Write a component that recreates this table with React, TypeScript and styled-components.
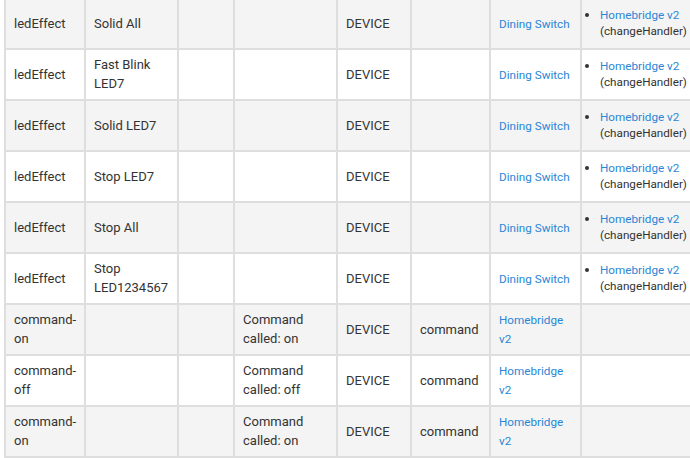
import React from "react";
import styled, { createGlobalStyle } from "styled-components";

const Global = createGlobalStyle`
  html, body { margin: 0; padding: 0; background: #fff; overflow: hidden; }
  body { font-family: Roboto, "Noto Sans", sans-serif; }
`;

const Viewport = styled.div`
  width: 690px;
  height: 458px;
  overflow: hidden;
  padding-left: 4px;
  box-sizing: border-box;
`;

const Table = styled.table`
  border-collapse: collapse;
  table-layout: fixed;
  width: 696px;
  margin-top: -3px;
  font-size: 13px;
  line-height: 19px;
  color: #333333;
`;

const Row = styled.tr<{ $shaded: boolean }>`
  background: ${(p) => (p.$shaded ? "#f4f4f4" : "#ffffff")};
`;

const Cell = styled.td`
  border: 2px solid #dedede;
  padding: 5px 8px 6px;
  height: 38px;
  vertical-align: middle;
  overflow: hidden;
`;

const Link = styled.a`
  color: #2a86d6;
  text-decoration: none;
  font-size: 11.7px;
  line-height: 1;
`;

const HandlerList = styled.ul`
  margin: 0;
  padding-left: 10px;
  font-size: 11.7px;
  line-height: 16px;
  li::marker { font-size: 13px; color: #333; }
`;

type Entry = {
  name: string;
  value: string;
  desc: string;
  type: string;
  kind: string;
  device: string;
  handler: boolean;
};

const rows: Entry[] = [
  { name: "ledEffect", value: "Solid All", desc: "", type: "DEVICE", kind: "", device: "Dining Switch", handler: true },
  { name: "ledEffect", value: "Fast Blink LED7", desc: "", type: "DEVICE", kind: "", device: "Dining Switch", handler: true },
  { name: "ledEffect", value: "Solid LED7", desc: "", type: "DEVICE", kind: "", device: "Dining Switch", handler: true },
  { name: "ledEffect", value: "Stop LED7", desc: "", type: "DEVICE", kind: "", device: "Dining Switch", handler: true },
  { name: "ledEffect", value: "Stop All", desc: "", type: "DEVICE", kind: "", device: "Dining Switch", handler: true },
  { name: "ledEffect", value: "Stop LED1234567", desc: "", type: "DEVICE", kind: "", device: "Dining Switch", handler: true },
  { name: "command-on", value: "", desc: "Command called: on", type: "DEVICE", kind: "command", device: "Homebridge v2", handler: false },
  { name: "command-off", value: "", desc: "Command called: off", type: "DEVICE", kind: "command", device: "Homebridge v2", handler: false },
  { name: "command-on", value: "", desc: "Command called: on", type: "DEVICE", kind: "command", device: "Homebridge v2", handler: false },
];

const widths = [80, 93, 56, 103, 74, 79, 91, 120];

export default function App() {
  return (
    <Viewport>
      <Global />
      <Table>
        <colgroup>
          {widths.map((w, i) => (
            <col key={i} style={{ width: w }} />
          ))}
        </colgroup>
        <tbody>
          {rows.map((r, i) => (
            <Row key={i} $shaded={i % 2 === 0}>
              <Cell>{r.name}</Cell>
              <Cell>{r.value}</Cell>
              <Cell />
              <Cell>{r.desc}</Cell>
              <Cell>{r.type}</Cell>
              <Cell>{r.kind}</Cell>
              <Cell>
                <Link href="#">{r.device}</Link>
              </Cell>
              <Cell>
                {r.handler && (
                  <HandlerList>
                    <li>
                      <Link href="#">Homebridge v2</Link> (changeHandler)
                    </li>
                  </HandlerList>
                )}
              </Cell>
            </Row>
          ))}
        </tbody>
      </Table>
    </Viewport>
  );
}
